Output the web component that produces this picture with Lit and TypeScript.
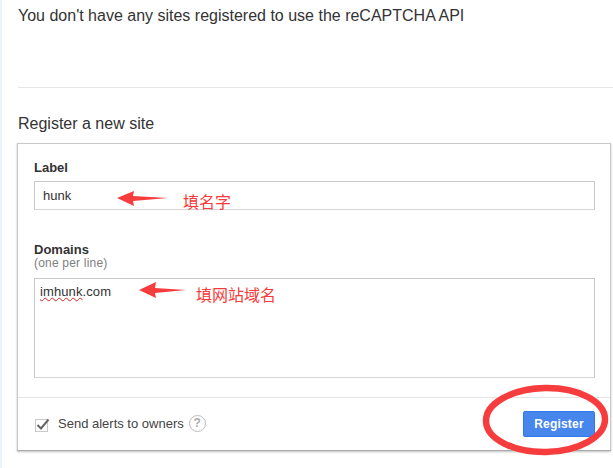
import { LitElement, html, css } from "lit";
import { customElement } from "lit/decorators.js";

@customElement("app-root")
export class AppRoot extends LitElement {
  static styles = css`
    :host {
      display: block;
      position: relative;
      width: 613px;
      height: 468px;
      overflow: hidden;
      background: #fff;
      font-family: "Liberation Sans", Arial, sans-serif;
      color: #333;
    }
    .page {
      height: 468px;
      box-sizing: border-box;
      margin-left: 2px;
      padding-left: 16px;
      display: flex;
      flex-direction: column;
    }
    .strip {
      position: absolute;
      left: 0;
      top: 0;
      bottom: 0;
      width: 2px;
      background: #eef3fa;
    }
    .msg {
      height: 80px;
      padding-top: 7px;
      font-size: 16px;
      line-height: 18px;
      color: #333;
      border-bottom: 1px solid #e5e5e5;
      flex: none;
    }
    h2 {
      margin: 26px 0 0;
      font-size: 16px;
      line-height: 20px;
      font-weight: 400;
      color: #333;
    }
    .card {
      margin: 9px 0 0 -1px;
      width: 594px;
      height: 308px;
      box-sizing: border-box;
      border: 1px solid #c8c8c8;
      border-bottom-color: #aaa;
      box-shadow: 0 1px 2px rgba(0, 0, 0, 0.25);
      display: flex;
      flex-direction: column;
      flex: none;
    }
    .body {
      flex: 1;
      padding: 16px 15px 0 16px;
    }
    label {
      display: block;
      font-size: 13px;
      line-height: 15px;
      font-weight: 700;
      color: #333;
    }
    .input {
      margin-top: 6px;
      height: 29px;
      box-sizing: border-box;
      border: 1px solid #c8c8c8;
      border-bottom-color: #d4d4d4;
      padding-left: 8px;
      font-size: 13px;
      line-height: 27px;
      color: #333;
    }
    .domains {
      margin-top: 32px;
    }
    .hint {
      font-size: 12px;
      line-height: 13px;
      letter-spacing: 0.2px;
      color: #808080;
    }
    .area {
      margin-top: 8px;
      height: 100px;
      box-sizing: border-box;
      border: 1px solid #c8c8c8;
      border-bottom-color: #d4d4d4;
      padding: 5px 5px;
      font-size: 13px;
      line-height: 16px;
      letter-spacing: 0.1px;
      color: #333;
    }
    .spell {
      text-decoration: underline wavy #e02020 1px;
      text-underline-offset: 1px;
      text-decoration-skip-ink: none;
    }
    .foot {
      height: 53px;
      box-sizing: border-box;
      border-top: 1px solid #e5e5e5;
      display: flex;
      align-items: center;
      padding: 0 15px 0 17px;
      font-size: 13px;
      color: #444;
    }
    .check {
      width: 13px;
      height: 13px;
      box-sizing: border-box;
      border: 1px solid #c8c8c8;
      position: relative;
      flex: none;
      margin-top: 2px;
    }
    .check svg {
      position: absolute;
      left: -1px;
      top: -3px;
    }
    .foot-label {
      margin-left: 10px;
      margin-bottom: 2px;
    }
    .q {
      margin-left: 5px;
      margin-bottom: 2px;
      width: 17px;
      height: 17px;
      box-sizing: border-box;
      border: 1px solid #bbb;
      border-radius: 50%;
      color: #aaa;
      font-size: 12px;
      font-weight: 700;
      line-height: 15px;
      text-align: center;
    }
    .btn {
      margin-left: auto;
      margin-bottom: 1px;
      width: 72px;
      height: 26px;
      box-sizing: border-box;
      background: #4787ed;
      border: 1px solid #3079ed;
      border-radius: 2px;
      color: #fff;
      font-size: 12px;
      letter-spacing: 0.2px;
      font-weight: 700;
      line-height: 24px;
      text-align: center;
    }
    .marks {
      position: absolute;
      left: 0;
      top: 0;
      pointer-events: none;
    }
    .note {
      position: absolute;
      color: #f53b3b;
      font-family: "Noto Sans CJK SC", sans-serif;
      font-size: 16px;
      line-height: 18px;
      white-space: nowrap;
    }
    .n1 { left: 183px; top: 192px; }
    .n2 { left: 196px; top: 285px; }
  `;

  render() {
    return html`
      <div class="strip"></div>
      <div class="page">
        <div class="msg">You don't have any sites registered to use the reCAPTCHA API</div>
        <h2>Register a new site</h2>
        <div class="card">
          <div class="body">
            <label>Label</label>
            <div class="input">hunk</div>
            <div class="domains">
              <label>Domains</label>
              <div class="hint">(one per line)</div>
              <div class="area"><span class="spell">imhunk</span>.com</div>
            </div>
          </div>
          <div class="foot">
            <span class="check">
              <svg width="15" height="15" viewBox="0 0 15 15">
                <path d="M2.5 8 L6 11.5 L13.5 2.5" fill="none" stroke="#666" stroke-width="2" />
              </svg>
            </span>
            <span class="foot-label">Send alerts to owners</span>
            <span class="q">?</span>
            <span class="btn">Register</span>
          </div>
        </div>
      </div>
      <svg class="marks" width="613" height="468" viewBox="0 0 613 468">
        <path d="M117 198 L134 191 L133 196 L168 198 L133 201 L134 206 Z" fill="#f63c3c" />
        <path d="M139 290 L156 282 L155 288 L186 290 L155 293 L156 298 Z" fill="#f63c3c" />
        <ellipse cx="545.5" cy="420" rx="59.5" ry="32" fill="none" stroke="#f63c3c" stroke-width="6.5" transform="rotate(-1 545.5 420)" />
      </svg>
      <span class="note n1">填名字</span>
      <span class="note n2">填网站域名</span>
    `;
  }
}
